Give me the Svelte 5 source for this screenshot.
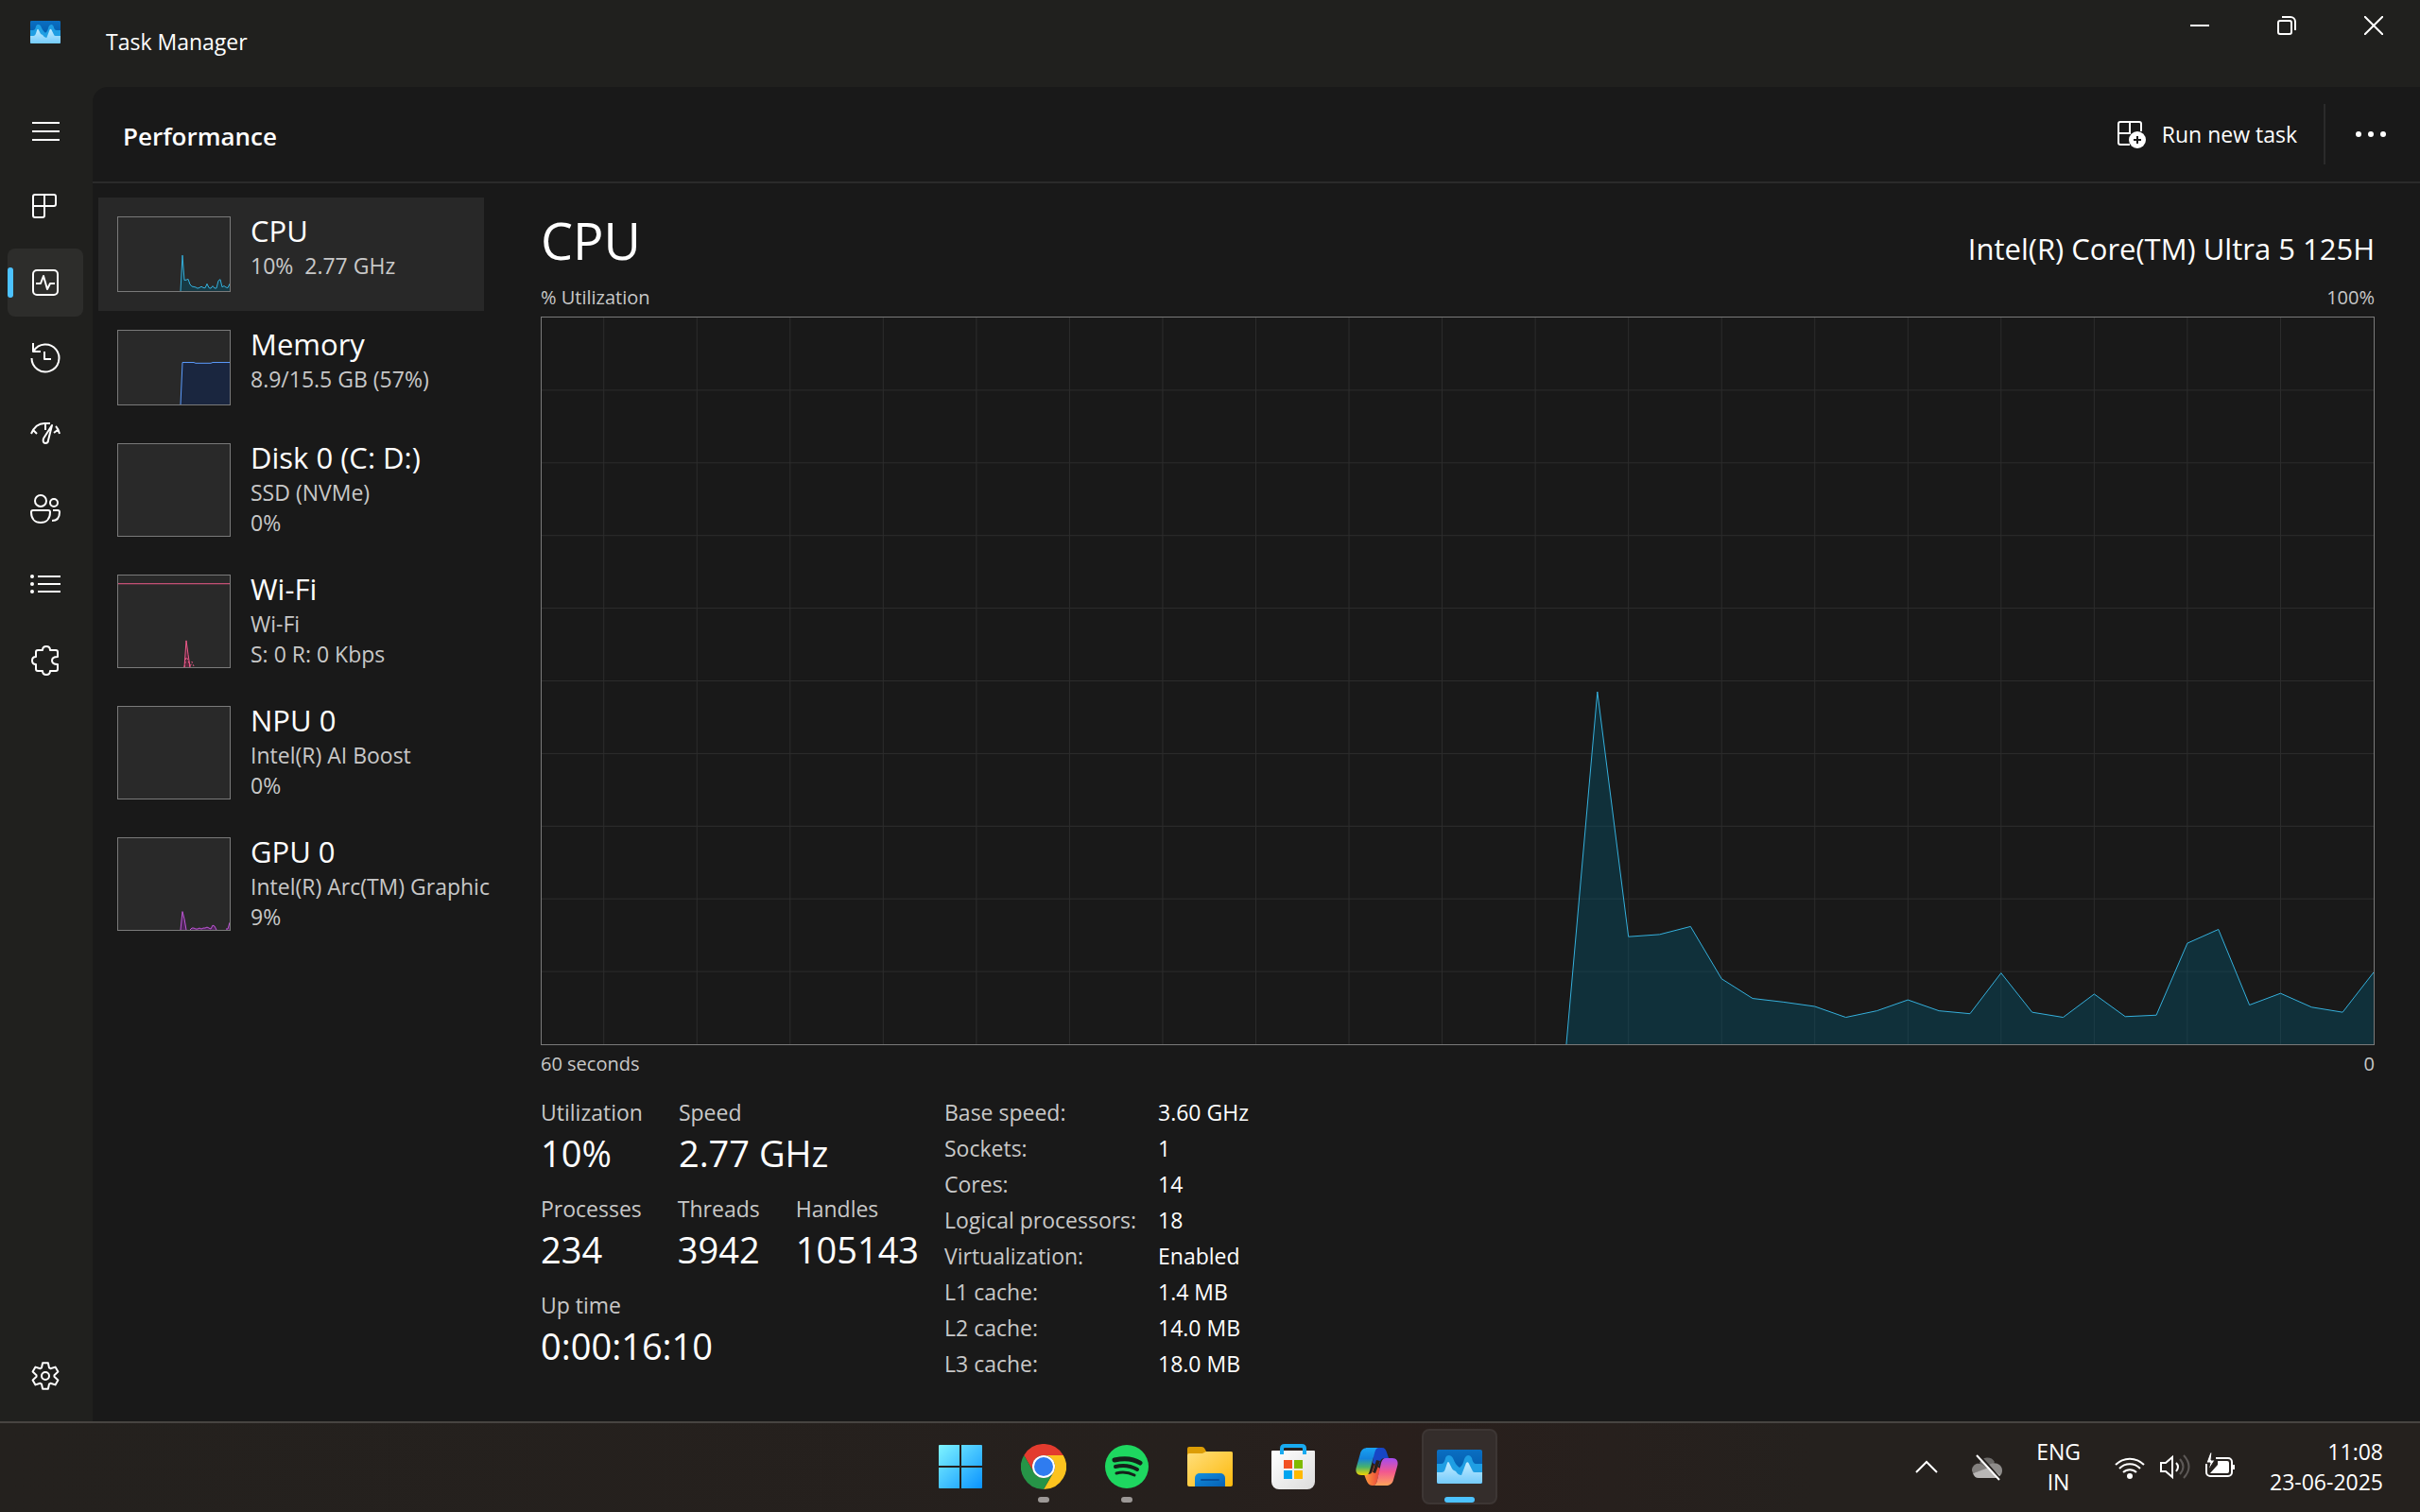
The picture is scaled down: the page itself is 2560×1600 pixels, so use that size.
<script lang="ts">
	type Series = { values: number[]; start?: number; dashed?: boolean };

	const cpu = [
		0, 48.5, 14.8, 15.1, 16.2, 9, 6.3, 5.8, 5.2, 3.7, 4.6, 6.1, 4.6, 4.2, 9.8, 4.4, 3.7, 6.9, 3.8,
		4, 13.9, 15.8, 5.4, 7, 5.1, 4.4, 9.9
	];
	const memory = [0, ...Array(7).fill(57), ...Array(9).fill(56), ...Array(10).fill(57)];

	const devices: {
		name: string;
		lines: string[];
		tone: string;
		series: Series[];
		cap?: number;
	}[] = [
		{ name: 'CPU', lines: ['10%  2.77 GHz'], tone: 'cpu', series: [{ values: cpu }] },
		{ name: 'Memory', lines: ['8.9/15.5 GB (57%)'], tone: 'memory', series: [{ values: memory }] },
		{ name: 'Disk 0 (C: D:)', lines: ['SSD (NVMe)', '0%'], tone: 'disk', series: [] },
		{
			name: 'Wi-Fi',
			lines: ['Wi-Fi', 'S: 0 R: 0 Kbps'],
			tone: 'wifi',
			series: [
				{ values: [0, 29, 14, 0], start: 35 },
				{ values: [0, 11, 8, 0, 6, 1], start: 35, dashed: true }
			],
			cap: 91
		},
		{ name: 'NPU 0', lines: ['Intel(R) AI Boost', '0%'], tone: 'npu', series: [] },
		{
			name: 'GPU 0',
			lines: ['Intel(R) Arc(TM) Graphic', '9%'],
			tone: 'gpu',
			series: [
				{ values: [0, 20, 12, 0], start: 33 },
				{ values: [0, 2, 2, 1, 1, 2, 1, 2, 2, 3, 2, 1, 5, 4, 0], start: 38 },
				{ values: [1, 1, 8], start: 57 }
			]
		}
	];

	const figures = [
		[
			['Utilization', '10%'],
			['Speed', '2.77 GHz']
		],
		[
			['Processes', '234'],
			['Threads', '3942'],
			['Handles', '105143']
		],
		[['Up time', '0:00:16:10']]
	];

	const details = [
		['Base speed:', '3.60 GHz'],
		['Sockets:', '1'],
		['Cores:', '14'],
		['Logical processors:', '18'],
		['Virtualization:', 'Enabled'],
		['L1 cache:', '1.4 MB'],
		['L2 cache:', '14.0 MB'],
		['L3 cache:', '18.0 MB']
	];

	const pages = [
		'Processes',
		'Performance',
		'App history',
		'Startup apps',
		'Users',
		'Details',
		'Services'
	];
	const apps = [
		{ name: 'Start', state: '' },
		{ name: 'Chrome', state: 'open' },
		{ name: 'Spotify', state: 'open' },
		{ name: 'File Explorer', state: '' },
		{ name: 'Microsoft Store', state: '' },
		{ name: 'Copilot', state: '' },
		{ name: 'Task Manager', state: 'active' }
	];

	let page = $state('Performance');
	let selected = $state('CPU');

	// one sample per second, the newest on the right edge
	function first(s: Series) {
		return s.start ?? 60 - s.values.length;
	}

	function points(s: Series) {
		return s.values.map((v, i) => `${first(s) + i},${100 - v}`).join(' ');
	}

	function gear() {
		const tooth = [
			[-4, -8.6],
			[-2.9, -13.8],
			[2.9, -13.8],
			[4, -8.6]
		];
		const out: string[] = [];
		for (let i = 0; i < 6; i++) {
			const a = (i * Math.PI) / 3;
			for (const [x, y] of tooth) {
				const px = 16 + x * Math.cos(a) - y * Math.sin(a);
				const py = 16 + x * Math.sin(a) + y * Math.cos(a);
				out.push(`${px.toFixed(2)},${py.toFixed(2)}`);
			}
		}
		return out.join(' ');
	}
</script>

{#snippet plot(series: Series[])}
	{#each series as s}
		{#if !s.dashed}
			<polygon
				class="area"
				points={`${first(s)},100 ${points(s)} ${first(s) + s.values.length - 1},100`}
			/>
		{/if}
		<polyline
			class="trace"
			class:dashed={s.dashed}
			points={points(s)}
			vector-effect="non-scaling-stroke"
		/>
	{/each}
{/snippet}

{#snippet logo(id: string)}
	<svg class="logo" viewBox="0 0 48 36" aria-hidden="true">
		<defs>
			<linearGradient id={`${id}-back`} x2="0" y2="1">
				<stop offset="0" stop-color="#0a6fc2" />
				<stop offset="1" stop-color="#0050a0" />
			</linearGradient>
			<linearGradient id={`${id}-front`} x2="0" y2="1">
				<stop offset="0" stop-color="#c4ecff" />
				<stop offset="1" stop-color="#74cbfb" />
			</linearGradient>
		</defs>
		<rect width="48" height="36" rx="2" fill={`url(#${id}-back)`} />
		<path
			d="M0 15h4c3 0 4-2 5-6 1-4 6-4 8 0 2 5 4 8 7 10 3-2 4-5 5-9 2-5 6-5 8-1 1 4 2 6 5 6h6v19a2 2 0 0 1-2 2H2a2 2 0 0 1-2-2z"
			fill="#1f9ee3"
		/>
		<path
			d="M0 24h5c2 0 3-1 4-4l2-6q1-2 2 0l3 6c1 2 3 2 4 3 2 3 4 4 6 4l5-13q2-2 3 1l3 6c1 2 1 3 3 3h8v10a2 2 0 0 1-2 2H2a2 2 0 0 1-2-2z"
			fill={`url(#${id}-front)`}
		/>
	</svg>
{/snippet}

<div class="screen">
	<header class="titlebar">
		<div class="titlebar-icon">{@render logo('title')}</div>
		<span class="window-title">Task Manager</span>
		<div class="window-buttons">
			<button type="button" aria-label="Minimize">
				<svg viewBox="0 0 20 20"><path d="M0 10h20" /></svg>
			</button>
			<button type="button" aria-label="Restore">
				<svg viewBox="0 0 20 20">
					<rect x="1" y="5" width="14" height="14" rx="2" />
					<path d="M5 1h9a5 5 0 0 1 5 5v9" />
				</svg>
			</button>
			<button type="button" aria-label="Close">
				<svg viewBox="0 0 20 20"><path d="M0 0l20 20M20 0L0 20" /></svg>
			</button>
		</div>
	</header>

	<div class="window">
		<nav class="rail" aria-label="Pages">
			<button type="button" aria-label="Open navigation">
				<svg viewBox="0 0 32 32"><path d="M2 7h29M2 16h29M2 25h29" /></svg>
			</button>
			{#each pages as name (name)}
				<button
					type="button"
					aria-label={name}
					class:current={page === name}
					onclick={() => (page = name)}
				>
					<svg viewBox="0 0 32 32">
						{#if name === 'Processes'}
							<path
								d="M5 3h20a2 2 0 0 1 2 2v8a2 2 0 0 1-2 2H15v10a2 2 0 0 1-2 2H5a2 2 0 0 1-2-2V5a2 2 0 0 1 2-2zM15 3v12H3"
							/>
						{:else if name === 'Performance'}
							<rect x="3" y="3" width="26" height="26" rx="4" />
							<path d="M6 17h5l3-8 4 14 3-6h5" />
						{:else if name === 'App history'}
							<path d="M1.500 16a14.500 14.500 0 1 0 2.200-7.700M3 0v9h8M15 9v8h7" />
						{:else if name === 'Startup apps'}
							<path
								d="M1 16C4 9 9 5 15 5h6M3 12l4 4M16 6v6M27 8c2 2 3 4 4 8M25 15l4-3M23 7l-9 14c-1 3 0 5 2 5s3-1 3-3z"
							/>
						{:else if name === 'Users'}
							<circle cx="11" cy="7" r="6" />
							<circle cx="25" cy="9" r="4" />
							<path
								d="M3 17h16a2 2 0 0 1 2 2c0 7-4 11-10 11S1 26 1 19a2 2 0 0 1 2-2zM24 17h5a2 2 0 0 1 2 2c0 6-3 9-8 9"
							/>
						{:else if name === 'Details'}
							<path d="M8 7h24M8 15h24M8 23h24" />
							<g class="dots">
								<circle cx="2" cy="7" r="2" />
								<circle cx="2" cy="15" r="2" />
								<circle cx="2" cy="23" r="2" />
							</g>
						{:else}
							<path
								d="M8 5h5c0-2.500 1.500-4 4-4s4 1.500 4 4h6a2 2 0 0 1 2 2v5c-4 0-6 1-6 4s2 4 6 4v5a2 2 0 0 1-2 2h-6c0 2.500-1.500 4-4 4s-4-1.500-4-4H8a2 2 0 0 1-2-2v-5c-2.500 0-4-1.500-4-4s1.500-4 4-4V7a2 2 0 0 1 2-2z"
							/>
						{/if}
					</svg>
				</button>
			{/each}
			<button type="button" class="settings" aria-label="Settings">
				<svg viewBox="0 0 32 32">
					<polygon points={gear()} />
					<circle cx="16" cy="16" r="4" />
				</svg>
			</button>
		</nav>

		<main class="page">
			<header class="page-header">
				<h1>Performance</h1>
				<button type="button" class="run">
					<svg viewBox="0 0 32 32">
						<path d="M14 27H4a2 2 0 0 1-2-2V5a2 2 0 0 1 2-2h20a2 2 0 0 1 2 2v8M14 3v12H2" />
						<circle class="solid" cx="22" cy="22" r="9" />
						<path class="plus" d="M22 18v8M18 22h8" />
					</svg>
					Run new task
				</button>
				<button type="button" class="more" aria-label="More options">
					<svg viewBox="0 0 32 6">
						<circle cx="3" cy="3" r="3" />
						<circle cx="16" cy="3" r="3" />
						<circle cx="29" cy="3" r="3" />
					</svg>
				</button>
			</header>

			<div class="content">
				<div class="devices">
					{#each devices as device (device.name)}
						<button
							type="button"
							class="device {device.tone}"
							class:selected={selected === device.name}
							onclick={() => (selected = device.name)}
						>
							<svg
								class="thumb"
								class:tall={device.lines.length > 1}
								viewBox="0 0 59 100"
								preserveAspectRatio="none"
							>
								{@render plot(device.series)}
								{#if device.cap}
									<path
										class="trace"
										d={`M0 ${100 - device.cap}h59`}
										vector-effect="non-scaling-stroke"
									/>
								{/if}
							</svg>
							<span class="device-text">
								<span class="device-name">{device.name}</span>
								{#each device.lines as line}
									<span class="device-line">{line}</span>
								{/each}
							</span>
						</button>
					{/each}
				</div>

				<section class="detail cpu">
					<div class="detail-heading">
						<h2>CPU</h2>
						<p>Intel(R) Core(TM) Ultra 5 125H</p>
					</div>
					<div class="axis"><span>% Utilization</span><span>100%</span></div>
					<div class="chart">
						<svg viewBox="0 0 59 100" preserveAspectRatio="none" role="img" aria-label="CPU usage">
							<g class="grid">
								{#each Array(9) as _, i}
									<path d={`M0 ${(i + 1) * 10}h59`} vector-effect="non-scaling-stroke" />
								{/each}
								{#each Array(19) as _, i}
									<path d={`M${i * 3 + 2} 0v100`} vector-effect="non-scaling-stroke" />
								{/each}
							</g>
							{@render plot([{ values: cpu }])}
						</svg>
					</div>
					<div class="axis"><span>60 seconds</span><span>0</span></div>

					<div class="stats">
						<div class="figures">
							{#each figures as row}
								<dl class="figure-row">
									{#each row as [label, value]}
										<div>
											<dt>{label}</dt>
											<dd>{value}</dd>
										</div>
									{/each}
								</dl>
							{/each}
						</div>
						<table>
							<tbody>
								{#each details as [label, value]}
									<tr><th scope="row">{label}</th><td>{value}</td></tr>
								{/each}
							</tbody>
						</table>
					</div>
				</section>
			</div>
		</main>
	</div>

	<footer class="taskbar">
		<div class="apps">
			{#each apps as app (app.name)}
				<button type="button" class="app {app.state}" aria-label={app.name}>
					{#if app.name === 'Start'}
						<svg viewBox="0 0 48 48">
							<defs>
								<linearGradient id="start" x2="1" y2="1">
									<stop offset="0" stop-color="#7ff4ff" />
									<stop offset="1" stop-color="#0a93ff" />
								</linearGradient>
							</defs>
							<path
								d="M2 1h21v22H1V2a1 1 0 0 1 1-1zM25 1h21a1 1 0 0 1 1 1v21H25zM1 25h22v22H2a1 1 0 0 1-1-1zM25 25h22v21a1 1 0 0 1-1 1H25z"
								fill="url(#start)"
							/>
						</svg>
					{:else if app.name === 'Chrome'}
						<svg viewBox="0 0 48 48">
							<path d="M24 12h20.800A24 24 0 0 0 3.200 12l10.400 18A12 12 0 0 1 24 12z" fill="#e33b2e" />
							<path d="M44.800 12H24a12 12 0 0 1 10.400 18L24 48a24 24 0 0 0 20.800-36z" fill="#fcc31e" />
							<path
								d="M3.200 12l10.400 18a12 12 0 0 0 20.800 0L24 48A24 24 0 0 1 3.200 12z"
								fill="#269447"
							/>
							<circle cx="24" cy="24" r="12" fill="#fff" />
							<circle cx="24" cy="24" r="10" fill="#2f7cf0" />
						</svg>
					{:else if app.name === 'Spotify'}
						<svg viewBox="0 0 48 48">
							<circle cx="24" cy="24" r="23" fill="#1ed760" />
							<g fill="none" stroke="#15201a" stroke-linecap="round">
								<path d="M11 17c9-2 19-2 27 3" stroke-width="5" />
								<path d="M12 24c8-2 16-1 23 3" stroke-width="4" />
								<path d="M13 31c7-2 13-1 19 2" stroke-width="3" />
							</g>
						</svg>
					{:else if app.name === 'File Explorer'}
						<svg viewBox="0 0 48 48">
							<defs>
								<linearGradient id="folder" x2="1" y2="1">
									<stop offset="0" stop-color="#ffdf7c" />
									<stop offset="1" stop-color="#fdb90c" />
								</linearGradient>
								<linearGradient id="folder-tab" x2="1" y2="1">
									<stop offset="0" stop-color="#1390df" />
									<stop offset="1" stop-color="#0560b5" />
								</linearGradient>
							</defs>
							<path
								d="M2 3h13c2 0 3 1 4 3l1 2h26a2 2 0 0 1 2 2v10H0V5a2 2 0 0 1 2-2z"
								fill="#dc9d05"
							/>
							<path
								d="M0 12q0-2 2-2h14l4-2h26q2 0 2 2v33q0 2-2 2H2q-2 0-2-2z"
								fill="url(#folder)"
							/>
							<path d="M8 45V36a5 5 0 0 1 5-5h22a5 5 0 0 1 5 5v9z" fill="url(#folder-tab)" />
							<path d="M15 38h18" stroke="#05509c" stroke-width="2" stroke-linecap="round" />
						</svg>
					{:else if app.name === 'Microsoft Store'}
						<svg viewBox="0 0 48 48">
							<defs>
								<linearGradient id="bag" x2="1" y2="1">
									<stop offset="0" stop-color="#fff" />
									<stop offset="1" stop-color="#dcdcdc" />
								</linearGradient>
							</defs>
							<path d="M2 7h44q1 0 1 1v32a8 8 0 0 1-8 8H9a8 8 0 0 1-8-8V8q0-1 1-1z" fill="url(#bag)" />
							<path d="M12 11V5q0-3 3-3h18q3 0 3 3v6" fill="none" stroke="#18aaf0" stroke-width="4" />
							<path d="M14 17h9v9h-9z" fill="#f25022" />
							<path d="M25 17h9v9h-9z" fill="#7fba00" />
							<path d="M14 28h9v9h-9z" fill="#00a4ef" />
							<path d="M25 28h9v9h-9z" fill="#ffb900" />
						</svg>
					{:else if app.name === 'Copilot'}
						<svg viewBox="0 0 48 48">
							<defs>
								<linearGradient id="cool" x2="0" y2="1">
									<stop offset="0" stop-color="#18a2f2" />
									<stop offset=".4" stop-color="#1483dc" />
									<stop offset=".7" stop-color="#48b26c" />
									<stop offset="1" stop-color="#f2d400" />
								</linearGradient>
								<linearGradient id="warm" x2="0" y2="1">
									<stop offset="0" stop-color="#a44cf0" />
									<stop offset=".5" stop-color="#f2588f" />
									<stop offset="1" stop-color="#ffa45a" />
								</linearGradient>
								<linearGradient id="fold" x2="1" y2="0">
									<stop offset="0" stop-color="#ffa03c" />
									<stop offset="1" stop-color="#e8403c" />
								</linearGradient>
							</defs>
							<g transform="translate(2 4)">
								<path d="M20 0h8c3 0 4 2 5 5l2 6h-4c-3 0-4 1-5 4l-2 5-6-4z" fill="#1746c6" />
								<path d="M9 28h4c3 0 4-1 5-4l2-6 6 4-3 12c-1 4-2 6-5 6-5 0-6-4-9-12z" fill="url(#fold)" />
								<path
									d="M13 0h12c-3 0-4 2-5 6l-5 18c-1 4-2 5-5 5H6c-4 0-7-3-5-9L5 6c1-4 4-6 8-6z"
									fill="url(#cool)"
								/>
								<path
									d="M32 11h7c4 0 7 3 5 9l-4 14c-1 4-4 6-8 6H18c3 0 4-2 5-6l4-18c1-3 2-5 5-5z"
									fill="url(#warm)"
								/>
								<path d="M26 14l-5 13-3-1 4-13z" fill="#291f1c" />
							</g>
						</svg>
					{:else}
						{@render logo('taskbar')}
					{/if}
				</button>
			{/each}
		</div>

		<div class="tray">
			<button type="button" aria-label="Show hidden icons">
				<svg class="chevron" viewBox="0 0 24 14"><path d="M1 13 12 2l11 11" /></svg>
			</button>
			<button type="button" aria-label="OneDrive">
				<svg viewBox="0 0 32 32">
					<g class="cloud">
						<path d="M8 12a9 9 0 0 1 16-1l-7 9z" fill="#6d6b69" />
						<path d="M0 20a7 7 0 0 1 9-7l9 5-17 5z" fill="#83807e" />
						<path d="M16 17c4-8 16-5 16 3 0 3-1 5-3 6z" fill="#8f8d8b" />
						<path d="M1 23l17-6 12 8c-2 3-4 3-6 3H7c-3 0-5-2-6-5z" fill="#b9b7b6" />
					</g>
					<path class="gap" d="M8 4l23 26" />
					<path d="M5 4l24 26" />
				</svg>
			</button>
			<button type="button" class="language"><span>ENG</span><span>IN</span></button>
			<button type="button" class="system" aria-label="Network, volume and battery">
				<svg viewBox="0 0 32 32">
					<path d="M1 14a21 21 0 0 1 30 0M5 18a15 15 0 0 1 22 0M9 22a10 10 0 0 1 14 0" />
					<circle class="solid" cx="16" cy="26" r="3" />
				</svg>
				<svg viewBox="0 0 32 32">
					<path d="M1 12v9h5l7 6V6l-7 6zM17 12q4 4 0 9" />
					<path class="faint" d="M21 8q7 8 0 16M25 4q11 12 0 24" />
				</svg>
				<svg viewBox="0 0 32 32">
					<path d="M11 7h13a4 4 0 0 1 4 4v11a4 4 0 0 1-4 4H5a4 4 0 0 1-4-4v-9M30 14v5" />
					<path class="solid" d="M13 10h10a2 2 0 0 1 2 2v9a2 2 0 0 1-2 2H5l8-9z" />
					<path class="solid bolt" d="M5 1 1 12h4L3 20l7-11H6l1-8z" />
				</svg>
			</button>
			<button type="button" class="clock"><span>11:08</span><span>23-06-2025</span></button>
		</div>
	</footer>
</div>

<style>
	:global(body) {
		margin: 0;
		background: #191919;
	}

	.screen {
		display: flex;
		flex-direction: column;
		min-height: 100vh;
		background: #20201e;
		color: #fff;
		font-family: 'Open Sans', 'Noto Sans', sans-serif;
		font-size: 23px;
	}

	.screen * {
		box-sizing: border-box;
	}

	button {
		border: 0;
		padding: 0;
		background: none;
		color: inherit;
		font: inherit;
	}

	svg {
		display: block;
		fill: none;
		stroke: #fff;
		stroke-width: 2;
	}

	h1,
	h2,
	p,
	dl,
	dd {
		margin: 0;
	}

	.logo {
		stroke: none;
	}

	/* title bar */
	.titlebar {
		display: flex;
		align-items: flex-start;
		height: 92px;
		padding-right: 3px;
	}

	.titlebar-icon {
		width: 112px;
		padding: 22px 0 0 32px;
	}

	.titlebar-icon .logo {
		width: 32px;
	}

	.window-title {
		flex: 1;
		padding-top: 28px;
		line-height: 32px;
	}

	.window-buttons {
		display: flex;
	}

	.window-buttons button {
		display: grid;
		place-items: center;
		width: 92px;
		height: 54px;
	}

	.window-buttons svg {
		width: 20px;
		height: 20px;
	}

	.window {
		display: flex;
		flex: 1;
	}

	/* left rail */
	.rail {
		display: flex;
		flex-direction: column;
		gap: 8px;
		width: 98px;
		padding: 11px 8px 12px;
	}

	.rail button {
		display: flex;
		align-items: center;
		width: 80px;
		height: 72px;
		padding-left: 24px;
		border-radius: 8px;
	}

	.rail svg {
		width: 32px;
		height: 32px;
		overflow: visible;
		stroke-linejoin: round;
	}

	.rail .dots {
		fill: #fff;
		stroke: none;
	}

	.rail .current {
		padding-left: 0;
		background: #2d2d2b;
	}

	.rail .current::before {
		width: 6px;
		height: 32px;
		margin-right: 18px;
		border-radius: 3px;
		background: #4cc2ff;
		content: '';
	}

	.rail .settings {
		margin-top: auto;
	}

	/* page */
	.page {
		display: flex;
		flex: 1;
		flex-direction: column;
		min-width: 0;
		border-top-left-radius: 16px;
		background: #191919;
	}

	.page-header {
		display: flex;
		align-items: center;
		height: 102px;
		padding-right: 4px;
		border-bottom: 2px solid #2b2b2b;
	}

	h1 {
		flex: 1;
		padding: 4px 0 0 32px;
		font-size: 26px;
		font-weight: 600;
		line-height: 36px;
	}

	.run {
		display: flex;
		align-items: center;
		gap: 16px;
		height: 64px;
		padding-right: 28px;
		border-right: 2px solid #2b2b2b;
	}

	.run svg {
		width: 32px;
		height: 32px;
	}

	.solid {
		fill: #fff;
		stroke: none;
	}

	.plus {
		stroke: #191919;
	}

	.more {
		display: grid;
		place-items: center;
		width: 96px;
		height: 64px;
	}

	.more svg {
		width: 32px;
		fill: #fff;
		stroke: none;
	}

	.content {
		display: flex;
		flex: 1;
	}

	/* device list */
	.devices {
		display: flex;
		flex-direction: column;
		width: 474px;
		padding: 15px 60px 0 6px;
	}

	.device {
		display: flex;
		align-items: flex-start;
		padding: 0 0 20px 20px;
		text-align: left;
	}

	.device.selected {
		background: #282828;
	}

	.thumb {
		flex: none;
		width: 120px;
		height: 80px;
		margin-top: 20px;
		border: 1px solid #7a7a7a;
		background: #292929;
	}

	.thumb.tall {
		height: 99px;
	}

	/* takes no height, so the thumbnail sets the row */
	.device-text {
		height: 0;
		padding: 14px 0 0 21px;
		color: #c8c8c8;
		line-height: 32px;
	}

	.device-name,
	.device-line {
		display: block;
		white-space: pre;
	}

	.device-name {
		color: #fff;
		font-size: 31px;
		line-height: 42px;
	}

	.cpu {
		--line: #35b0dc;
		--fill: #173a45;
	}

	.memory {
		--line: #5c9cff;
		--fill: #1a263f;
	}

	.wifi {
		--line: #ee5a8a;
		--fill: #55283a;
	}

	.gpu {
		--line: #c058d8;
		--fill: #4d2458;
	}

	.area {
		fill: var(--fill);
		stroke: none;
	}

	.trace {
		fill: none;
		stroke: var(--line);
		stroke-width: 1px;
	}

	.dashed {
		stroke-dasharray: 2 2;
	}

	/* selected device */
	.detail {
		display: flex;
		flex: 1;
		flex-direction: column;
		min-width: 0;
		padding: 25px 48px 42px 0;
	}

	.detail-heading {
		display: flex;
		align-items: baseline;
		justify-content: space-between;
		margin-bottom: 10px;
		line-height: 70px;
	}

	h2 {
		font-size: 54px;
		font-weight: 400;
	}

	.detail-heading p {
		font-size: 31px;
		line-height: 42px;
	}

	.axis {
		display: flex;
		justify-content: space-between;
		color: #c8c8c8;
		font-size: 20px;
		line-height: 32px;
	}

	.chart {
		display: flex;
		flex: 1;
		flex-direction: column;
		min-height: 320px;
		margin: 4px 0;
		border: 1px solid #7a7a7a;
	}

	.chart svg {
		flex: 1 0 0px;
		width: 100%;
		height: 0;
	}

	.chart .area {
		fill: #005b78;
		fill-opacity: 0.35;
	}

	.grid {
		stroke: #2d2d2d;
		stroke-width: 1px;
		shape-rendering: crispEdges;
	}

	.stats {
		display: flex;
		gap: 26px;
		margin-top: 16px;
		line-height: 38px;
	}

	.figures {
		display: flex;
		flex-direction: column;
		gap: 16px;
		min-width: 401px;
	}

	.figure-row {
		display: flex;
		gap: 38px;
	}

	dt,
	th {
		color: #c8c8c8;
	}

	dd {
		font-size: 38px;
		line-height: 48px;
	}

	table {
		align-self: flex-start;
		border-spacing: 0;
	}

	th,
	td {
		padding: 0;
		font-weight: 400;
		text-align: left;
	}

	th {
		width: 226px;
	}

	/* taskbar */
	.taskbar {
		display: grid;
		grid-template-columns: 1fr auto 1fr;
		align-items: center;
		height: 96px;
		padding-bottom: 2px;
		border-top: 2px solid #474441;
		background: linear-gradient(90deg, #24211e, #26201d 50%, #291f1c 58%, #25211e 75%);
	}

	.apps {
		display: flex;
		grid-column: 2;
		gap: 8px;
	}

	.app {
		position: relative;
		display: grid;
		place-items: center;
		width: 80px;
		height: 80px;
		border: 2px solid transparent;
		border-radius: 8px;
	}

	.app svg {
		width: 48px;
		stroke: none;
	}

	.app.active {
		border-color: #3d3634;
		background: #342d2b;
	}

	/* running indicator under the icon */
	.app.open::after,
	.app.active::after {
		position: absolute;
		bottom: 0;
		width: 12px;
		height: 6px;
		border-radius: 3px;
		background: #9c9896;
		content: '';
	}

	.app.active::after {
		width: 32px;
		background: #4cc2ff;
	}

	.tray {
		display: flex;
		align-items: center;
		justify-content: flex-end;
		gap: 36px;
		padding-right: 39px;
		line-height: 32px;
	}

	.tray svg {
		width: 32px;
		height: 32px;
	}

	.tray .chevron {
		width: 24px;
		height: 14px;
	}

	.cloud {
		stroke: none;
	}

	.gap {
		stroke: #25211e;
	}

	.faint {
		stroke: #5c5856;
	}

	.bolt {
		stroke: #25211e;
		stroke-width: 1;
	}

	.language span,
	.clock span {
		display: block;
	}

	.system {
		display: flex;
		gap: 16px;
	}

	.clock {
		text-align: right;
	}
</style>
